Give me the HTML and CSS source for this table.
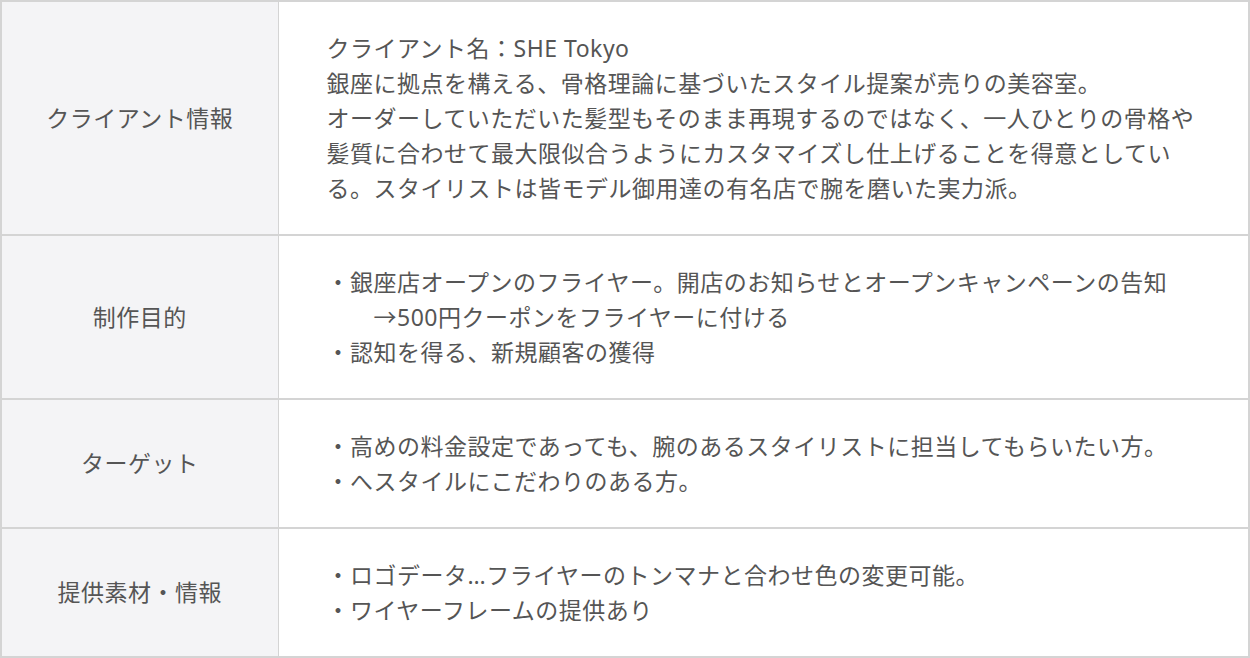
FILE: index.html
```html
<!DOCTYPE html>
<html lang="ja">
<head>
<meta charset="utf-8">
<link rel="stylesheet" href="styles.css">
</head>
<body>
<table class="spec">
  <tr>
    <th class="label">クライアント情報</th>
    <td class="body">クライアント名：SHE Tokyo<br>銀座に拠点を構える、骨格理論に基づいたスタイル提案が売りの美容室。<br>オーダーしていただいた髪型もそのまま再現するのではなく、一人ひとりの骨格や<br>髪質に合わせて最大限似合うようにカスタマイズし仕上げることを得意としてい<br>る。スタイリストは皆モデル御用達の有名店で腕を磨いた実力派。</td>
  </tr>
  <tr>
    <th class="label">制作目的</th>
    <td class="body">・銀座店オープンのフライヤー。開店のお知らせとオープンキャンペーンの告知<br>　　→500円クーポンをフライヤーに付ける<br>・認知を得る、新規顧客の獲得</td>
  </tr>
  <tr>
    <th class="label">ターゲット</th>
    <td class="body">・高めの料金設定であっても、腕のあるスタイリストに担当してもらいたい方。<br>・へスタイルにこだわりのある方。</td>
  </tr>
  <tr>
    <th class="label">提供素材・情報</th>
    <td class="body">・ロゴデータ…フライヤーのトンマナと合わせ色の変更可能。<br>・ワイヤーフレームの提供あり</td>
  </tr>
</table>
</body>
</html>
```
FILE: styles.css
```css
html, body {
  margin: 0;
  padding: 0;
  background: #ffffff;
}
.spec {
  width: 1250px;
  border-collapse: collapse;
  border: 2px solid #d4d4d4;
  font-family: "Noto Sans", "Noto Sans CJK JP", sans-serif;
  font-size: 23px;
  letter-spacing: 0.5px;
  color: #555555;
}
.spec tr {
  border-top: 2px solid #d4d4d4;
}
.label {
  width: 277px;
  box-sizing: border-box;
  background: #f4f4f6;
  font-weight: normal;
  text-align: center;
  vertical-align: middle;
  border-right: 1px solid #d4d4d4;
  padding: 0;
  line-height: 35px;
}
.body {
  padding: 29px 20px 28px 48px;
  line-height: 35px;
  text-align: left;
  white-space: nowrap;
}
```
